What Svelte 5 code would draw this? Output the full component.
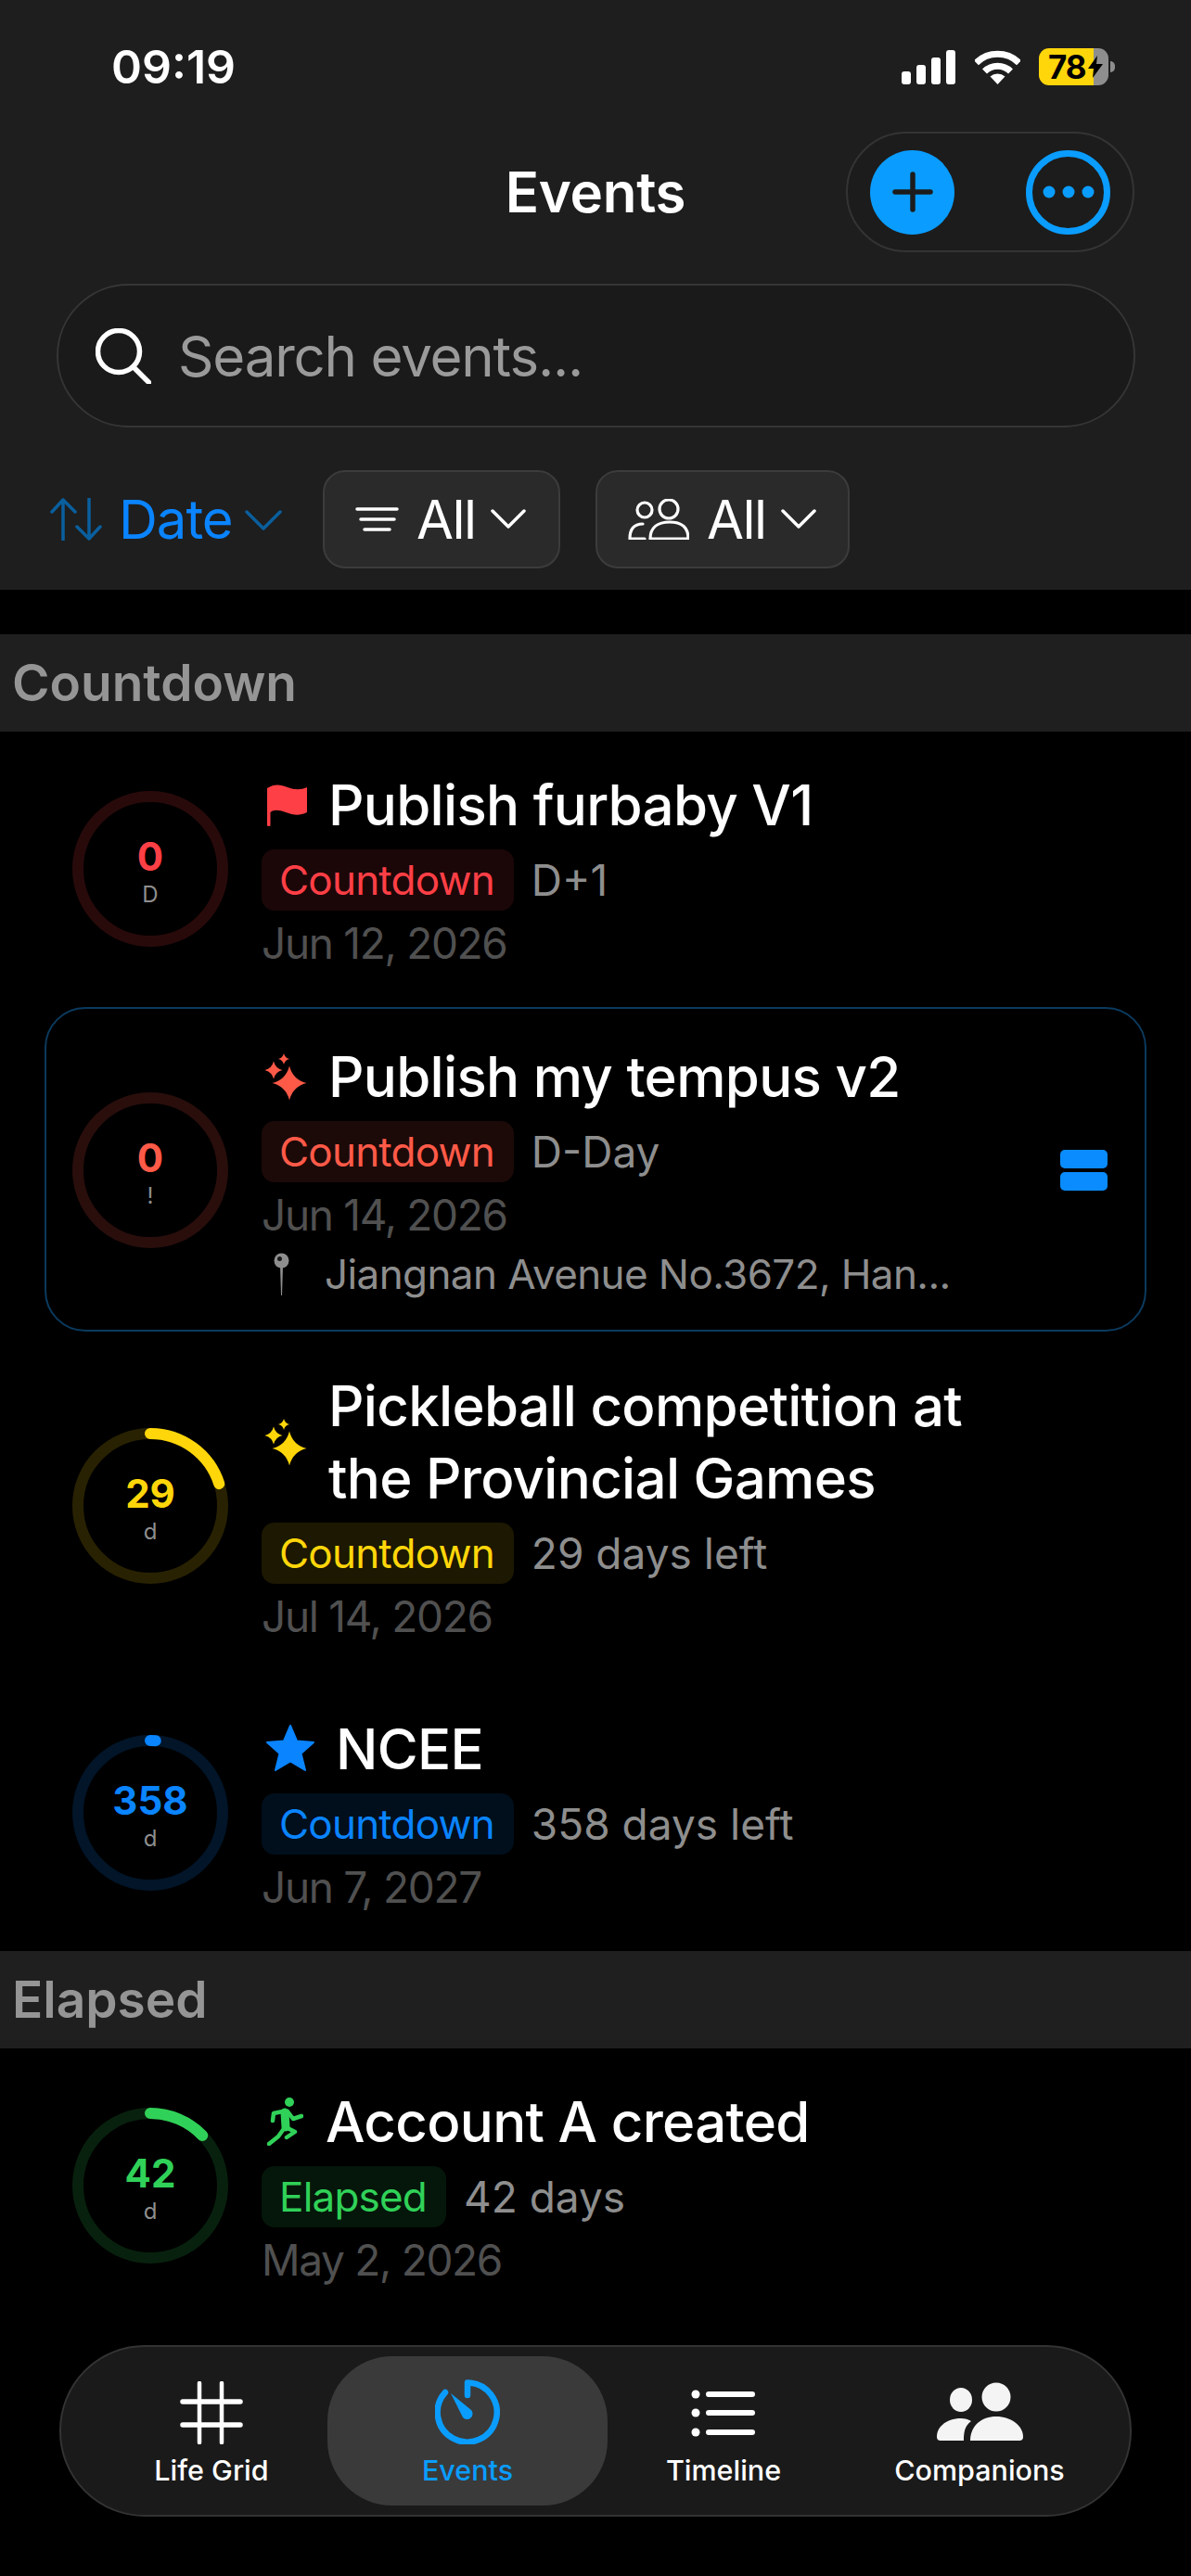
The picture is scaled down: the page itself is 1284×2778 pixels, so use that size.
<script>
const RED = '#ff3f46';
const CORAL = '#ff5a48';
const YELLOW = '#ffd60a';
const BLUE = '#0a84ff';
const GREEN = '#30d158';

const countdown = [
  { icon: 'flag', title: 'Publish furbaby V1', color: RED, num: '0', unit: 'D', progress: 0, kind: 'Countdown', note: 'D+1', date: 'Jun 12, 2026' },
  { icon: 'sparkle', title: 'Publish my tempus v2', color: CORAL, num: '0', unit: '!', progress: 0, kind: 'Countdown', note: 'D-Day', date: 'Jun 14, 2026', place: 'Jiangnan Avenue No.3672, Han...', selected: true },
  { icon: 'sparkle', title: 'Pickleball competition at the Provincial Games', color: YELLOW, num: '29', unit: 'd', progress: 0.2, kind: 'Countdown', note: '29 days left', date: 'Jul 14, 2026' },
  { icon: 'star', title: 'NCEE', color: BLUE, num: '358', unit: 'd', progress: 0.012, kind: 'Countdown', note: '358 days left', date: 'Jun 7, 2027' }
];
const elapsed = [
  { icon: 'runner', title: 'Account A created', color: GREEN, num: '42', unit: 'd', progress: 0.128, kind: 'Elapsed', note: '42 days', date: 'May 2, 2026' }
];
const sections = [
  { name: 'Countdown', rows: countdown },
  { name: 'Elapsed', rows: elapsed }
];
const tabs = ['Life Grid', 'Events', 'Timeline', 'Companions'];

const R = 78;
const CIRC = 2 * Math.PI * R;

function star(x, y, r) {
  const k = r * 0.2;
  return `M${x} ${y - r}Q${x + k} ${y - k} ${x + r} ${y}Q${x + k} ${y + k} ${x} ${y + r}Q${x - k} ${y + k} ${x - r} ${y}Q${x - k} ${y - k} ${x} ${y - r}Z`;
}
</script>

<div class="page">
  <header>
    <div class="status">
      <span class="time">09:19</span>
      <div class="status-icons">
        <svg width="59" height="37" viewBox="0 0 59 37" fill="#fff">
          <rect x="0" y="23" width="10" height="14" rx="3" />
          <rect x="16" y="16" width="10" height="21" rx="3" />
          <rect x="32" y="8" width="10" height="29" rx="3" />
          <rect x="48" y="0" width="10" height="37" rx="3" />
        </svg>
        <svg width="49" height="37" viewBox="0 0 49 37" fill="none" stroke="#fff" stroke-width="7">
          <path d="M1.5 13.7A33 33 0 0 1 47.5 13.7" />
          <path d="M10.5 23A20 20 0 0 1 38.5 23" />
          <path d="M24.5 37L16.5 28.5A12 12 0 0 1 32.5 28.5Z" fill="#fff" stroke="none" />
        </svg>
        <div class="battery">
          <span>78</span>
          <svg width="16" height="24" viewBox="0 0 16 24"><path d="M10 0L0 14H6L5 24L16 9H9Z" fill="#000" /></svg>
        </div>
        <i class="nub"></i>
      </div>
    </div>

    <div class="nav">
      <h1>Events</h1>
      <div class="actions">
        <button class="add" aria-label="Add">
          <svg width="44" height="44" viewBox="0 0 44 44" stroke="#1c1c1c" stroke-width="5.5" stroke-linecap="round"><path d="M22 3V41M3 22H41" /></svg>
        </button>
        <button class="more" aria-label="More">
          <svg width="56" height="14" viewBox="0 0 56 14" fill="#0a9dff"><circle cx="7" cy="7" r="6.5" /><circle cx="28" cy="7" r="6.5" /><circle cx="49" cy="7" r="6.5" /></svg>
        </button>
      </div>
    </div>

    <div class="search">
      <svg width="60" height="60" viewBox="0 0 60 60" fill="none" stroke="#fff" stroke-width="5.5" stroke-linecap="round"><circle cx="25" cy="25" r="22.5" /><path d="M41 42L58 59" /></svg>
      <span>Search events...</span>
    </div>

    <div class="filters">
      <div class="sort">
        <svg width="56" height="46" viewBox="0 0 56 46" fill="none" stroke="#0a5f9e" stroke-width="3.5" stroke-linecap="round" stroke-linejoin="round"><path d="M14 2V45M2 15L14 2L27 15M42 1V44M29 31L42 44L54 31" /></svg>
        <span>Date</span>
        <svg class="chev" width="40" height="22" viewBox="0 0 40 22" fill="none" stroke="#0a5f9e" stroke-width="3.5" stroke-linecap="round" stroke-linejoin="round"><path d="M2 2L20 20L38 2" /></svg>
      </div>
      <button class="chip first">
        <svg width="47" height="28" viewBox="0 0 47 28" fill="none" stroke="#fff" stroke-width="3.5" stroke-linecap="round"><path d="M2 3H45M6 14H42M10 25H37" /></svg>
        <span>All</span>
        <svg width="38" height="22" viewBox="0 0 38 22" fill="none" stroke="#fff" stroke-width="3.5" stroke-linecap="round" stroke-linejoin="round"><path d="M2 2L19 19L36 2" /></svg>
      </button>
      <button class="chip">
        <svg width="66" height="44" viewBox="0 0 66 44" fill="none" stroke="#fff" stroke-width="3.2" stroke-linejoin="round" stroke-linecap="round"><circle cx="18" cy="12" r="8" /><circle cx="44" cy="11" r="10" /><path d="M24 43C24 31 32 25 45 25C58 25 65 31 65 43Z" /><path d="M16 27C6 27 2 33 2 43H18" /></svg>
        <span>All</span>
        <svg width="38" height="22" viewBox="0 0 38 22" fill="none" stroke="#fff" stroke-width="3.5" stroke-linecap="round" stroke-linejoin="round"><path d="M2 2L19 19L36 2" /></svg>
      </button>
    </div>
  </header>

  <main>
    {#each sections as section}
      <h2>{section.name}</h2>
      <div class="list">
        {#each section.rows as row}
          <article class="row" class:selected={row.selected} style="--c:{row.color}">
            <div class="ring">
              <svg width="168" height="168" viewBox="0 0 168 168" fill="none" stroke-width="12">
                <circle class="track" cx="84" cy="84" r={R} />
                {#if row.progress > 0}
                  <circle class="arc" cx="84" cy="84" r={R} stroke-dasharray="{CIRC * row.progress} {CIRC}" transform="rotate(-90 84 84)" />
                {/if}
              </svg>
              <b>{row.num}</b>
              <small>{row.unit}</small>
            </div>

            <div class="body">
              <div class="title">
                {#if row.icon === 'flag'}
                  <svg class="flag" width="43" height="45" viewBox="0 0 43 45"><path d="M0 4C8 -1 14 0 22 3C30 6 36 6 43 3V30C35 34 28 33 20 30C12 27 7 27 3.500 30V44Q3.500 45 2 45Q0 45 0 44Z" /></svg>
                {:else if row.icon === 'sparkle'}
                  <svg class="sparkle" width="46" height="50" viewBox="0 0 46 50"><path d={star(26, 32, 18.5)} /><path d={star(9, 18, 9.5)} /><path d={star(20, 6, 6)} /></svg>
                {:else if row.icon === 'star'}
                  <svg class="star" width="54" height="52" viewBox="0 0 54 52"><path d="M27 1L34 17.500L52 19L38.500 31L43 49L27 39.500L11 49L15.500 31L2 19L20 17.500Z" /></svg>
                {:else}
                  <svg class="runner" width="39" height="52" viewBox="0 0 39 52" fill="none" stroke-width="4.500" stroke-linecap="round" stroke-linejoin="round"><circle cx="24" cy="5" r="5" /><path d="M17 15L7 17L6 25M22 15L28 23L37 20M20 32L30 37L21 43M17 35L12 42L2 50" /><path d="M19 16L20 32" stroke-width="9" /></svg>
                {/if}
                <span>{row.title}</span>
              </div>
              <div class="meta">
                <span class="badge">{row.kind}</span>
                <span class="note">{row.note}</span>
              </div>
              <div class="date">{row.date}</div>
              {#if row.place}
                <div class="place">
                  <svg width="17" height="46" viewBox="0 0 17 46"><path d="M7 14H10L9 46H8Z" fill="#8e8e8e" /><circle cx="8.500" cy="8.500" r="8" fill="#8e8e8e" /><circle cx="6.500" cy="6.500" r="2.500" fill="#1a1a1a" /></svg>
                  <span>{row.place}</span>
                </div>
              {/if}
            </div>

            {#if row.selected}
              <div class="handle"><i></i><i></i></div>
            {/if}
          </article>
        {/each}
      </div>
    {/each}
  </main>

  <nav>
    {#each tabs as tab, i}
      <div class="tab" class:active={i === 1}>
        {#if i === 0}
          <svg width="68" height="68" viewBox="0 0 68 68" stroke="#fff" stroke-linecap="round"><path d="M21 2V66M45 2V66" stroke-width="4.500" /><path d="M3 22H65M3 47H65" stroke-width="5.500" /></svg>
        {:else if i === 1}
          <svg width="70" height="70" viewBox="0 0 70 70" fill="none" stroke="#0a9dff" stroke-width="6.500" stroke-linecap="round"><path d="M35 3.500A32 32 0 1 1 11 14M35 3.500V17" /><path d="M17 15L39 33A6 6 0 0 1 30 41Z" fill="#0a9dff" stroke="none" /></svg>
        {:else if i === 2}
          <svg width="70" height="68" viewBox="0 0 70 68" fill="#fff" stroke="#fff" stroke-linecap="round"><circle cx="5" cy="14" r="4.500" stroke="none" /><circle cx="5" cy="34" r="4.500" stroke="none" /><circle cx="5" cy="55" r="4.500" stroke="none" /><path d="M19 14H66M19 34H66M19 55H66" stroke-width="6" /></svg>
        {:else}
          <svg width="93" height="68" viewBox="0 0 93 68" fill="#f4f4f4"><ellipse cx="26" cy="20" rx="12" ry="13" /><circle cx="64" cy="17" r="15.500" /><path d="M36 64C36 48 48 38 64 38C80 38 93 48 93 60Q93 64 89 64Z" /><path d="M0 60C0 48 12 40 26 40C30 40 34 41 37 43C30 48 29 55 29 64H4Q0 64 0 60Z" /></svg>
        {/if}
        <span>{tab}</span>
      </div>
    {/each}
  </nav>
</div>

<style>
:global(body) {
  background: #000;
  font-family: Inter, "Liberation Sans", sans-serif;
}

.page {
  position: relative;
  height: 2778px;
  overflow: hidden;
  color: #fff;
}

header {
  height: 636px;
  background: #1e1e1e;
}

button {
  font: inherit;
  color: inherit;
  padding: 0;
  margin: 0;
}

.status {
  height: 142px;
  display: flex;
  align-items: flex-start;
  justify-content: space-between;
  padding: 52px 82px 0 120px;
  box-sizing: border-box;
}

.time {
  font-size: 50px;
  font-weight: 600;
  line-height: 40px;
}

.status-icons {
  display: flex;
  align-items: center;
  gap: 20px;
  height: 40px;
}

.battery {
  position: relative;
  width: 75px;
  height: 40px;
  border-radius: 11px;
  background: linear-gradient(90deg, #ffd60a 59px, #8e8e8e 59px);
  color: #000;
  font-size: 35px;
  font-weight: 700;
  line-height: 40px;
  padding-left: 10px;
  box-sizing: border-box;
  letter-spacing: -1px;
}

.battery svg {
  position: absolute;
  left: 53px;
  top: 8px;
}

.nub {
  width: 5px;
  height: 12px;
  margin-left: -18px;
  border-radius: 0 5px 5px 0;
  background: #8e8e8e;
}

.nav {
  height: 130px;
  display: flex;
  justify-content: flex-end;
  align-items: center;
  padding-right: 61px;
  position: relative;
}

h1 {
  position: absolute;
  left: 0;
  right: 0;
  margin: 0;
  text-align: center;
  font-size: 60px;
  font-weight: 600;
  letter-spacing: -0.3px;
}

.actions {
  position: relative;
  width: 311px;
  height: 130px;
  box-sizing: border-box;
  display: flex;
  justify-content: space-between;
  align-items: center;
  padding: 0 24px;
  border: 2px solid #343434;
  border-radius: 65px;
  background: #1c1c1c;
}

.add,
.more {
  width: 91px;
  height: 91px;
  border-radius: 50%;
  display: flex;
  align-items: center;
  justify-content: center;
  box-sizing: border-box;
}

.add {
  background: #0a9dff;
  border: none;
}

.more {
  background: none;
  border: 7px solid #0a9dff;
}

.search {
  margin: 34px 60px 0 61px;
  height: 155px;
  box-sizing: border-box;
  display: flex;
  align-items: center;
  gap: 29px;
  padding-left: 40px;
  border: 2px solid #363636;
  border-radius: 78px;
  background: #1a1a1a;
  font-size: 60px;
  letter-spacing: -1.2px;
  color: #9a9a9a;
}

.filters {
  margin-top: 46px;
  height: 106px;
  display: flex;
  align-items: center;
  padding-left: 54px;
}

.sort {
  display: flex;
  align-items: center;
  gap: 18px;
  width: 294px;
  font-size: 58px;
  letter-spacing: -1px;
  color: #0a84ff;
}

.chev {
  margin: 2px 0 0 -5px;
}

.chip {
  height: 106px;
  width: 274px;
  box-sizing: border-box;
  display: flex;
  align-items: center;
  gap: 19px;
  padding-left: 33px;
  border: 2px solid #3c3c3c;
  border-radius: 24px;
  background: #2a2a2a;
  font-size: 58px;
  letter-spacing: -1.5px;
  margin-left: 38px;
}

.chip svg:last-child {
  margin-left: -3px;
}

.chip.first {
  width: 256px;
  margin-left: 0;
}

h2 {
  margin: 48px 0 0;
  height: 105px;
  line-height: 105px;
  padding-left: 13px;
  background: #1f1f1f;
  color: #959595;
  font-size: 55px;
  font-weight: 600;
}

.list + h2 {
  margin-top: 0;
}

.list {
  display: flex;
  flex-direction: column;
  gap: 1px;
  padding: 2px 0 4px;
}

.row {
  margin: 0 48px;
  padding: 38px 42px 38px 30px;
  display: flex;
  align-items: center;
  gap: 36px;
}

.row.selected {
  margin: 3px 48px 2px;
  padding-top: 34px;
  padding-bottom: 33px;
  border: 2px solid #0b3a5e;
  border-radius: 44px;
  padding-left: 28px;
  padding-right: 40px;
}

.ring {
  position: relative;
  flex: none;
  width: 168px;
  height: 168px;
  box-sizing: border-box;
  padding-top: 6px;
  display: flex;
  flex-direction: column;
  align-items: center;
  justify-content: center;
}

.ring svg {
  position: absolute;
  inset: 0;
}

.track {
  stroke: color-mix(in srgb, var(--c) 16%, #000);
}

.arc {
  stroke: var(--c);
  stroke-linecap: round;
}

.ring b {
  color: var(--c);
  font-size: 42px;
  font-weight: 700;
  line-height: 46px;
  margin-top: 1px;
}

.ring small {
  color: #8e8e8e;
  font-size: 24px;
  line-height: 30px;
  margin-top: 3px;
}

.body {
  flex: 1;
  min-width: 0;
}

.title {
  display: flex;
  align-items: center;
  gap: 20px;
  padding-left: 4px;
  font-size: 60px;
  font-weight: 500;
  letter-spacing: -0.7px;
  line-height: 78px;
}

.title span {
  max-width: 720px;
}

.title svg {
  flex: none;
}

.flag {
  margin-left: 2px;
  margin-right: 3px;
}

.sparkle {
  margin-right: 2px;
}

.star {
  margin-right: 2px;
}

.runner {
  margin-left: 2px;
  margin-right: 4px;
}

.flag,
.sparkle,
.star {
  fill: var(--c);
}

.star {
  stroke: var(--c);
  stroke-width: 2;
  stroke-linejoin: round;
}

.runner {
  stroke: var(--c);
}

.runner circle {
  fill: var(--c);
  stroke: none;
}

.meta {
  display: flex;
  align-items: center;
  gap: 19px;
  margin-top: 9px;
}

.badge {
  height: 66px;
  line-height: 66px;
  padding: 0 21px 0 19px;
  border-radius: 14px;
  color: var(--c);
  background: color-mix(in srgb, var(--c) 11%, #000);
  font-size: 44px;
  letter-spacing: -0.8px;
}

.note {
  color: #8e8e8e;
  font-size: 46px;
}

.date {
  margin-top: 8px;
  color: #505050;
  font-size: 46px;
  letter-spacing: -1.3px;
  line-height: 54px;
}

.place {
  display: flex;
  align-items: center;
  gap: 38px;
  margin-top: 10px;
  padding-left: 13px;
  color: #8e8e8e;
  font-size: 44px;
  letter-spacing: -0.6px;
  line-height: 54px;
}

.handle {
  flex: none;
  width: 51px;
  display: flex;
  flex-direction: column;
  gap: 4px;
}

.handle i {
  height: 20px;
  border-radius: 5px;
  background: #0a8cff;
}

nav {
  position: absolute;
  left: 64px;
  right: 64px;
  bottom: 64px;
  height: 185px;
  box-sizing: border-box;
  padding: 10px 24px;
  display: grid;
  grid-template-columns: repeat(4, 1fr);
  border: 2px solid #333;
  border-radius: 92px;
  background: #1a1a1a;
}

.tab {
  display: flex;
  flex-direction: column;
  align-items: center;
  justify-content: flex-end;
  gap: 10px;
  padding-bottom: 20px;
  font-size: 30.5px;
  font-weight: 500;
  line-height: 36px;
  border-radius: 70px;
}

.tab.active {
  margin: 0 -13px;
  background: #3a3a3a;
  color: #0a9dff;
}
</style>
